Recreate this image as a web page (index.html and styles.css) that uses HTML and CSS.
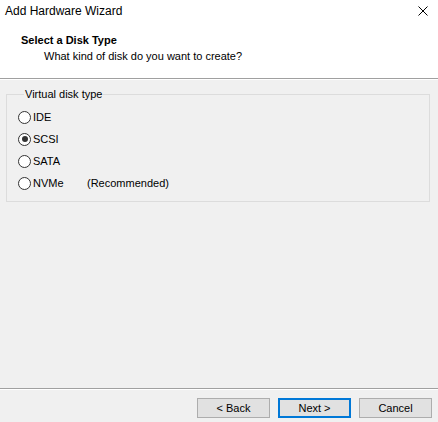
FILE: index.html
```html
<!DOCTYPE html>
<html>
<head>
<meta charset="utf-8">
<link rel="stylesheet" href="styles.css">
</head>
<body>
<div class="window">
  <div class="top">
    <div class="titlebar">
      <span class="title">Add Hardware Wizard</span>
      <svg class="close" width="10" height="10" viewBox="0 0 10 10"><path d="M0.5 0.5 L9.5 9.5 M9.5 0.5 L0.5 9.5" stroke="#000" stroke-width="1" fill="none"/></svg>
    </div>
    <div class="header">
      <div class="heading">Select a Disk Type</div>
      <div class="sub">What kind of disk do you want to create?</div>
    </div>
  </div>
  <div class="sep"></div>
  <div class="content">
    <fieldset class="group">
      <legend>Virtual disk type</legend>
      <div class="opt"><span class="radio"></span><span>IDE</span></div>
      <div class="opt"><span class="radio checked"></span><span>SCSI</span></div>
      <div class="opt"><span class="radio"></span><span>SATA</span></div>
      <div class="opt"><span class="radio"></span><span class="nv">NVMe</span><span>(Recommended)</span></div>
    </fieldset>
  </div>
  <div class="sep"></div>
  <div class="buttons">
    <div class="btn">&lt; Back</div>
    <div class="btn default">Next &gt;</div>
    <div class="btn">Cancel</div>
  </div>
</div>
</body>
</html>
```
FILE: styles.css
```css
html, body { margin: 0; padding: 0; }
body {
  width: 438px;
  height: 422px;
  background: #f0f0f0;
  font-family: "Liberation Sans", Arial, sans-serif;
  font-size: 11px;
  color: #000;
  overflow: hidden;
}
.window { display: flex; flex-direction: column; height: 422px; }
.top { background: #fff; height: 78px; }
.titlebar {
  height: 30px;
  display: flex;
  align-items: flex-start;
  justify-content: space-between;
  padding: 0 10px 0 5px;
}
.title { font-size: 12px; margin-top: 4px; }
.close { margin-top: 6px; }
.header { padding-left: 21px; }
.heading { font-weight: bold; font-size: 11px; line-height: 13px; margin-top: 4px; }
.sub { padding-left: 23px; line-height: 13px; margin-top: 3px; }
.sep { height: 1px; background: #a0a0a0; border-bottom: 1px solid #fff; }
.content { flex: 1; padding: 8px 8px 0 6px; }
.group {
  margin: 0;
  border: 1px solid #dcdcdc;
  height: 114px;
  box-sizing: border-box;
  padding: 5px 0 0 11px;
}
.group legend { padding: 0 1px; margin-left: 6px; line-height: 13px; }
.opt { display: flex; align-items: center; height: 22px; }
.radio {
  width: 11px; height: 11px;
  border: 1px solid #333;
  border-radius: 50%;
  background: #fff;
  margin-right: 2px;
  position: relative;
  box-sizing: content-box;
}
.radio.checked::after {
  content: "";
  position: absolute;
  left: 2.5px; top: 2.5px;
  width: 6px; height: 6px;
  border-radius: 50%;
  background: #333;
}
.nv { width: 54px; }
.buttons {
  height: 32px;
  display: flex;
  justify-content: flex-end;
  gap: 8px;
  padding: 8px 6px 0 0;
  box-sizing: border-box;
}
.btn {
  width: 73px; height: 20px;
  box-sizing: border-box;
  border: 1px solid #adadad;
  background: #e1e1e1;
  display: flex; align-items: center; justify-content: center;
}
.btn.default { border: 2px solid #0078d7; }
```
